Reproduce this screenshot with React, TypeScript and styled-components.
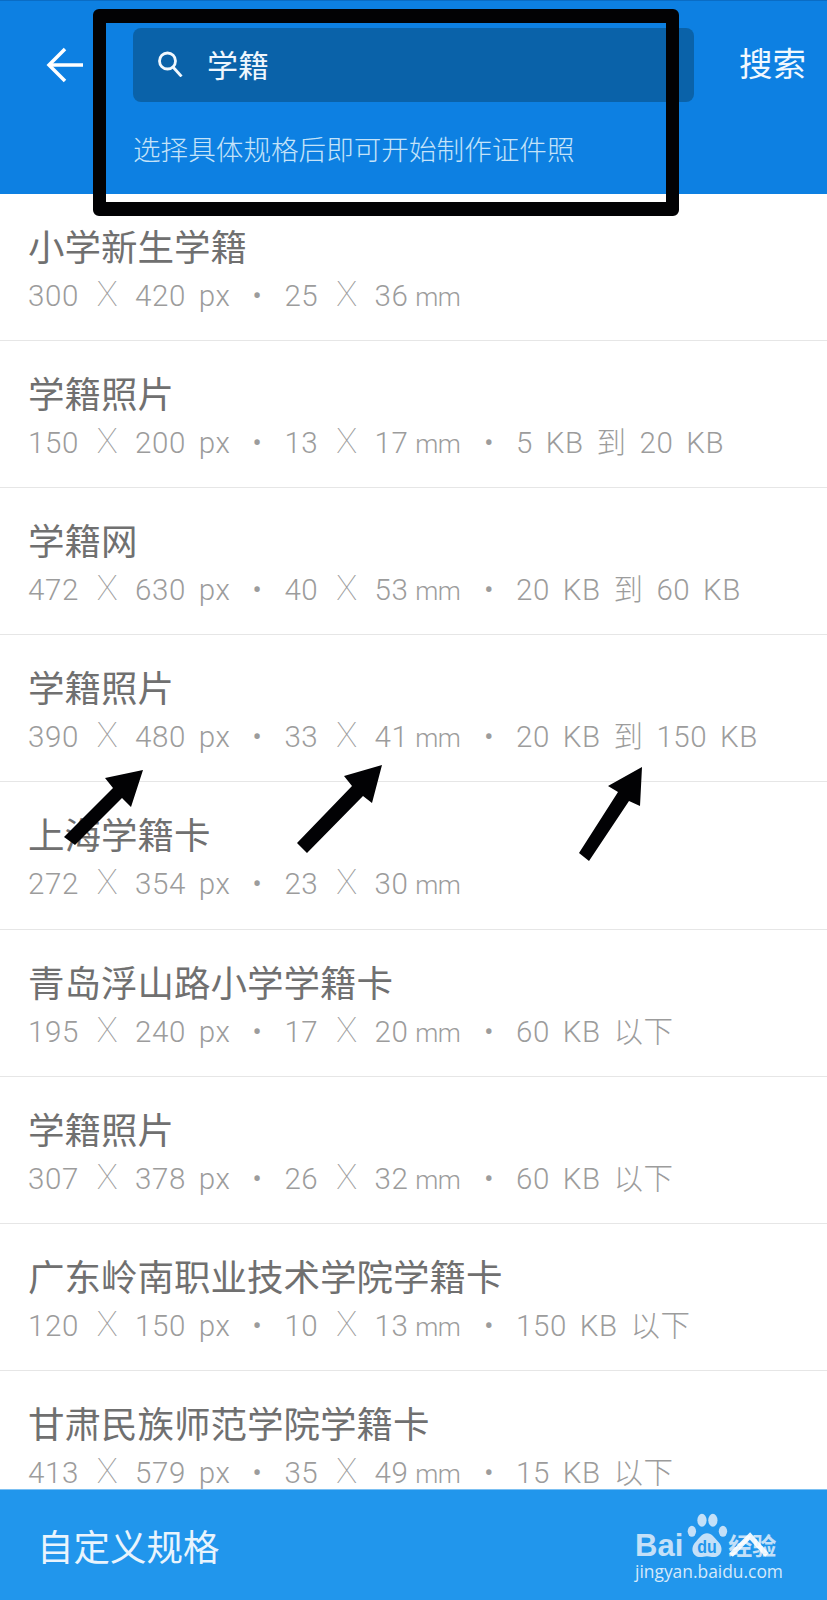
import React from 'react';
import styled, { createGlobalStyle } from 'styled-components';

const GlobalStyle = createGlobalStyle`
  html, body {
    margin: 0;
    padding: 0;
    background: #fff;
  }
  body {
    font-family: Roboto, "Noto Sans CJK SC", sans-serif;
  }
`;

const Page = styled.div`
  position: relative;
  display: flex;
  flex-direction: column;
  width: 827px;
  height: 1600px;
  overflow: hidden;
`;

const Header = styled.header`
  display: flex;
  flex: none;
  align-items: flex-start;
  box-sizing: border-box;
  height: 194px;
  padding: 27px 21px 0 46px;
  background: #0d80e2;
  border-top: 1px solid #0a6cc4;
`;

const BackButton = styled.div`
  display: flex;
  flex: none;
  align-items: center;
  width: 87px;
  height: 74px;
`;

const SearchColumn = styled.div`
  display: flex;
  flex: 1;
  flex-direction: column;
  gap: 29px;
`;

const SearchBox = styled.div`
  display: flex;
  align-items: center;
  gap: 24px;
  box-sizing: border-box;
  width: 561px;
  height: 74px;
  padding: 0 0 3px 24px;
  border-radius: 8px;
  background: #0a62a9;
  color: #eef6fd;
  font-size: 31px;
`;

const Hint = styled.div`
  color: #c4e3f9;
  font-size: 27.6px;
  font-weight: 300;
  line-height: 40px;
`;

const SearchAction = styled.div`
  flex: none;
  color: #f1f8fe;
  font-size: 33.5px;
  line-height: 74px;
`;

const List = styled.main`
  flex: 1;
  overflow: hidden;
`;

const Row = styled.div<{ $first?: boolean }>`
  box-sizing: border-box;
  height: ${(p) => (p.$first ? '147px' : '147.15px')};
  padding: 31px 0 0 28px;
  border-bottom: 1px solid #e6e6e6;
`;

const RowTitle = styled.div`
  color: #707070;
  font-size: 36.5px;
  line-height: 48px;
`;

const RowSpec = styled.div`
  margin-top: 7px;
  color: #9c9c9c;
  font-size: 29.5px;
  font-weight: 300;
  letter-spacing: 0.6px;
  line-height: 32px;
  white-space: pre;
  word-spacing: 5px;
`;

const Times = styled.span`
  margin: 0 4px 0 5px;
  font-size: 35px;
  font-weight: 100;
  line-height: 0;
`;

const Unit = styled.span`
  margin: 0 2px 0 -6px;
  font-size: 26px;
  letter-spacing: -0.6px;
`;

const Dot = styled.span`
  display: inline-block;
  width: 54px;
  text-align: center;
`;

const Footer = styled.footer`
  display: flex;
  flex: none;
  align-items: center;
  box-sizing: border-box;
  height: 111px;
  padding: 0 0 0 37px;
  background: #2196ec;
  border-top: 1px solid #7cc0f2;
  color: #e9f4fd;
  font-size: 36.5px;
`;

const Markup = styled.div`
  position: absolute;
  top: 9px;
  left: 93px;
  box-sizing: border-box;
  width: 586px;
  height: 207px;
  border-style: solid;
  border-width: 14px 13px;
  border-radius: 6px;
  border-color: #020204;
`;

const MarkupShade = styled.div`
  position: absolute;
  top: 194px;
  left: 107px;
  width: 559px;
  height: 8px;
  background: #fff;
`;

const Annotations = styled.svg`
  position: absolute;
  top: 0;
  left: 0;
  width: 827px;
  height: 1600px;
  pointer-events: none;
`;

const Watermark = styled.div`
  position: absolute;
  top: 1514px;
  left: 635px;
  width: 170px;
`;

const LogoRow = styled.div`
  display: flex;
  align-items: flex-end;
  height: 44px;
  color: #c4e0f8;
  font-family: "Liberation Sans", sans-serif;
  font-size: 31px;
  font-weight: 700;
  line-height: 24px;
  white-space: nowrap;
`;

const LogoMark = styled.svg`
  flex: none;
  width: 42px;
  height: 46px;
  margin-left: 3px;
`;

const LogoCn = styled.span`
  font-family: "Noto Sans CJK SC", sans-serif;
  font-size: 24px;
  line-height: 26px;
`;

const WatermarkUrl = styled.div`
  color: #d5e9fa;
  font-family: "Open Sans", sans-serif;
  font-size: 17.4px;
  line-height: 27px;
  white-space: nowrap;
`;

const rows = [
  { title: '小学新生学籍', px: ['300', '420'], mm: ['25', '36'] },
  { title: '学籍照片', px: ['150', '200'], mm: ['13', '17'], size: '5 KB 到 20 KB' },
  { title: '学籍网', px: ['472', '630'], mm: ['40', '53'], size: '20 KB 到 60 KB' },
  { title: '学籍照片', px: ['390', '480'], mm: ['33', '41'], size: '20 KB 到 150 KB' },
  { title: '上海学籍卡', px: ['272', '354'], mm: ['23', '30'] },
  { title: '青岛浮山路小学学籍卡', px: ['195', '240'], mm: ['17', '20'], size: '60 KB 以下' },
  { title: '学籍照片', px: ['307', '378'], mm: ['26', '32'], size: '60 KB 以下' },
  { title: '广东岭南职业技术学院学籍卡', px: ['120', '150'], mm: ['10', '13'], size: '150 KB 以下' },
  { title: '甘肃民族师范学院学籍卡', px: ['413', '579'], mm: ['35', '49'], size: '15 KB 以下' },
];

function App() {
  return (
    <Page>
      <GlobalStyle />
      <Header>
        <BackButton>
          <svg width="38" height="36" viewBox="0 0 38 36" fill="none" stroke="#fff" strokeWidth="3.5">
            <path d="M37 18H3" />
            <path d="M19 2L3 18l16 16" />
          </svg>
        </BackButton>
        <SearchColumn>
          <SearchBox>
            <svg width="26" height="26" viewBox="0 0 26 26" fill="none" stroke="#f1f8fe" strokeWidth="2.8">
              <circle cx="10.5" cy="10" r="8" />
              <path d="M16 16l8.5 9.5" />
            </svg>
            学籍
          </SearchBox>
          <Hint>选择具体规格后即可开始制作证件照</Hint>
        </SearchColumn>
        <SearchAction>搜索</SearchAction>
      </Header>
      <List>
        {rows.map((row, i) => (
          <Row key={i} $first={i === 0}>
            <RowTitle>{row.title}</RowTitle>
            <RowSpec>
              {row.px[0]} <Times>X</Times> {row.px[1]} px
              <Dot>•</Dot>
              {row.mm[0]} <Times>X</Times> {row.mm[1]} <Unit>mm</Unit>
              {row.size && (
                <>
                  <Dot>•</Dot>
                  {row.size}
                </>
              )}
            </RowSpec>
          </Row>
        ))}
      </List>
      <Footer>自定义规格</Footer>

      <MarkupShade />
      <Markup />

      <Watermark>
        <LogoRow>
          Bai
          <LogoMark viewBox="0 0 50 50" preserveAspectRatio="none">
            <g fill="#c4e0f8">
              <ellipse cx="19" cy="9" rx="5.5" ry="7" />
              <ellipse cx="32" cy="9" rx="5.5" ry="7" />
              <ellipse cx="7" cy="21" rx="5" ry="6" />
              <ellipse cx="44" cy="21" rx="5" ry="6" />
              <path d="M25 23c6 0 8 4 13 9 8 7 4 17-5 17-3 0-5-1-8-1s-5 1-8 1c-9 0-13-10-5-17 5-5 7-9 13-9z" />
            </g>
            <text x="25" y="45" textAnchor="middle" fill="#2196ec" fontSize="19" fontWeight="700" fontFamily="Liberation Sans, sans-serif">du</text>
          </LogoMark>
          <LogoCn>经验</LogoCn>
        </LogoRow>
        <WatermarkUrl>jingyan.baidu.com</WatermarkUrl>
      </Watermark>

      <Annotations viewBox="0 0 827 1600">
        <polygon fill="#020204" points="143,770 105,778 113,788 64,837 75,845 122,798 131,807" />
        <polygon fill="#020204" points="382,765 344,776 352,786 297,843 307,853 363,796 372,803" />
        <polygon fill="#020204" points="642,767 608,786 618,792 579,853 589,861 629,801 640,806" />
        <path d="M731 1555L750 1536L767 1555" fill="none" stroke="#fff" strokeWidth="5" opacity="0.9" />
      </Annotations>
    </Page>
  );
}

export default App;
